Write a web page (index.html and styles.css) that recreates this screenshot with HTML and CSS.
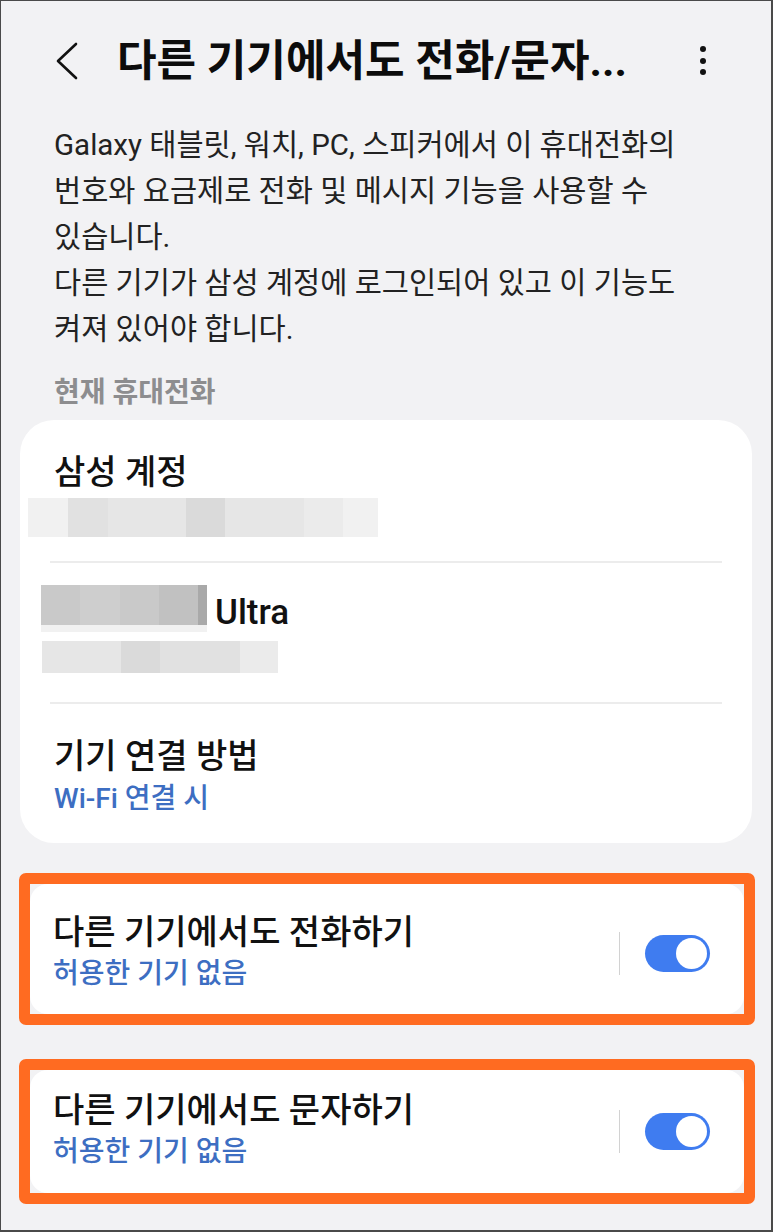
FILE: index.html
```html
<!DOCTYPE html>
<html lang="ko">
  <head>
    <meta charset="UTF-8" />
    <meta name="viewport" content="width=device-width, initial-scale=1.0" />
    <title>다른 기기에서도 전화/문자하기</title>
    <link rel="stylesheet" href="styles.css">
  </head>
  <body>
    <div class="screen">
      <header class="appbar">
        <button type="button" class="icon-btn back" aria-label="뒤로">
          <svg width="40" height="40" viewBox="0 0 40 40">
            <polyline points="29,3 11,20 29,37" fill="none" stroke="#111" stroke-width="2.6" stroke-linecap="round" stroke-linejoin="round" />
          </svg>
        </button>
        <h1 class="title">다른 기기에서도 전화/문자...</h1>
        <button type="button" class="icon-btn more" aria-label="더보기">
          <svg width="24" height="40" viewBox="0 0 24 40">
            <circle cx="12" cy="8" r="3" fill="#111" />
            <circle cx="12" cy="20" r="3" fill="#111" />
            <circle cx="12" cy="31" r="3" fill="#111" />
          </svg>
        </button>
      </header>

      <p class="intro">
        Galaxy 태블릿, 워치, PC, 스피커에서 이 휴대전화의<br>
        번호와 요금제로 전화 및 메시지 기능을 사용할 수<br>
        있습니다.<br>
        다른 기기가 삼성 계정에 로그인되어 있고 이 기능도<br>
        켜져 있어야 합니다.
      </p>

      <h2 class="section-label">현재 휴대전화</h2>

      <div class="card">
        <div class="row row-account">
          <div class="row-title">삼성 계정</div>
          <div class="blur blur-account">
            <span class="w40 s0"></span><span class="w40 s3"></span><span class="w78 s2"></span><span class="w39 s4"></span><span class="w79 s2"></span><span class="w39 s1"></span><span class="w35 s0"></span>
          </div>
        </div>
        <div class="divider"></div>
        <div class="row row-device">
          <div class="device-name">
            <div class="blur blur-model">
              <span class="w39 d1"></span><span class="w40 d2"></span><span class="w39 d1"></span><span class="w39 d3"></span><span class="w9 d4"></span>
            </div>
            <span class="model">Ultra</span>
          </div>
          <div class="blur-strip"></div>
          <div class="blur blur-number">
            <span class="w40 s2"></span><span class="w39 s2"></span><span class="w39 s4"></span><span class="w40 s3"></span><span class="w40 s3"></span><span class="w38 s1"></span>
          </div>
        </div>
        <div class="divider"></div>
        <div class="row row-method">
          <div class="row-title">기기 연결 방법</div>
          <div class="row-sub">Wi-Fi 연결 시</div>
        </div>
      </div>

      <div class="frame">
        <div class="setting">
          <div class="setting-text">
            <div class="row-title">다른 기기에서도 전화하기</div>
            <div class="row-sub">허용한 기기 없음</div>
          </div>
          <div class="vline"></div>
          <div class="switch on"></div>
        </div>
      </div>

      <div class="frame frame-second">
        <div class="setting">
          <div class="setting-text">
            <div class="row-title">다른 기기에서도 문자하기</div>
            <div class="row-sub">허용한 기기 없음</div>
          </div>
          <div class="vline"></div>
          <div class="switch on"></div>
        </div>
      </div>
    </div>
  </body>
</html>
```

FILE: styles.css
```css
* {
  box-sizing: border-box;
}
html,
body {
  margin: 0;
  padding: 0;
}
body {
  font-family: Roboto, "Noto Sans CJK KR", sans-serif;
  color: #111;
}
.screen {
  width: 773px;
  height: 1232px;
  background-color: #f2f2f4;
  border-style: solid;
  border-color: #4a4a4a;
  border-width: 1px 2px 2px 1px;
  overflow: hidden;
}

/* app bar */
.appbar {
  display: flex;
  align-items: center;
  height: 56px;
  margin-top: 32px;
  padding: 0 56px 0 46px;
}
.icon-btn {
  display: flex;
  padding: 0;
  border: none;
  background: none;
}
.title {
  margin: 0 0 0 30px;
  font-size: 43px;
  font-weight: 700;
  line-height: 56px;
  color: #0c0c0c;
  white-space: nowrap;
}
.more {
  margin-left: auto;
}

/* description */
.intro {
  margin: 33px 0 0;
  padding: 0 16px 0 53px;
  font-size: 29.5px;
  line-height: 46px;
  color: #222;
}
.section-label {
  margin: 24px 0 0;
  padding-left: 53px;
  font-size: 28px;
  font-weight: 700;
  line-height: 34px;
  color: #8d8d8f;
}

/* account card */
.card {
  margin: 10px 19px 0 19px;
  background-color: #fff;
  border-radius: 34px;
}
.row {
  padding: 32px 34px 24px;
}
.row-title {
  font-size: 34px;
  font-weight: 500;
  line-height: 40px;
  color: #111;
}
.row-sub {
  font-size: 28px;
  font-weight: 500;
  line-height: 40px;
  color: #3d6ec2;
}
.divider {
  height: 2px;
  margin: 0 30px;
  background-color: #ececec;
}
.row-device {
  padding-top: 22px;
  padding-bottom: 29px;
}
.row-method .row-sub {
  margin-top: 3px;
}

/* censored blocks */
.blur {
  display: flex;
}
.blur span {
  display: block;
  height: 100%;
}
.blur-account {
  height: 39px;
  margin: 6px 0 0 -26px;
}
.device-name {
  display: flex;
  align-items: center;
  height: 40px;
}
.blur-model {
  height: 40px;
  margin-left: -13px;
}
.model {
  margin-left: 8px;
  padding-top: 14px;
  font-size: 35px;
  font-weight: 500;
  color: #111;
}
.blur-strip {
  width: 166px;
  height: 7px;
  margin-left: -13px;
  background-color: #f1f1f1;
}
.blur-number {
  height: 32px;
  margin: 9px 0 0 -12px;
}
.w9 { width: 9px; }
.w35 { width: 35px; }
.w38 { width: 38px; }
.w39 { width: 39px; }
.w40 { width: 40px; }
.w78 { width: 78px; }
.w79 { width: 79px; }
.s0 { background-color: #f1f1f1; }
.s1 { background-color: #ebebeb; }
.s2 { background-color: #e6e6e6; }
.s3 { background-color: #e1e1e1; }
.s4 { background-color: #dadada; }
.d1 { background-color: #c9c9c9; }
.d2 { background-color: #cecece; }
.d3 { background-color: #c1c1c1; }
.d4 { background-color: #a9a9a9; }

/* highlighted settings */
.frame {
  margin: 30px 16px 0 18px;
  border: 11px solid #ff6b21;
  border-radius: 7px;
  background-color: #f2f2f4;
}
.frame-second {
  margin-top: 34px;
}
.setting {
  display: flex;
  align-items: center;
  padding: 28px 34px 20px 23px;
  background-color: #fff;
  border-radius: 18px;
}
.frame-second .setting {
  padding-top: 20px;
  padding-bottom: 21px;
}
.setting-text {
  flex: 1;
}
.setting-text .row-sub {
  margin-top: 2px;
}
.vline {
  width: 1px;
  height: 43px;
  background-color: #d2d2d2;
}
.switch {
  position: relative;
  width: 65px;
  height: 37px;
  margin-left: 25px;
  border-radius: 19px;
  background-color: #3f7cf0;
}
.switch.on::after {
  content: "";
  position: absolute;
  top: 3px;
  right: 3px;
  width: 31px;
  height: 31px;
  border-radius: 50%;
  background-color: #fff;
}
```
